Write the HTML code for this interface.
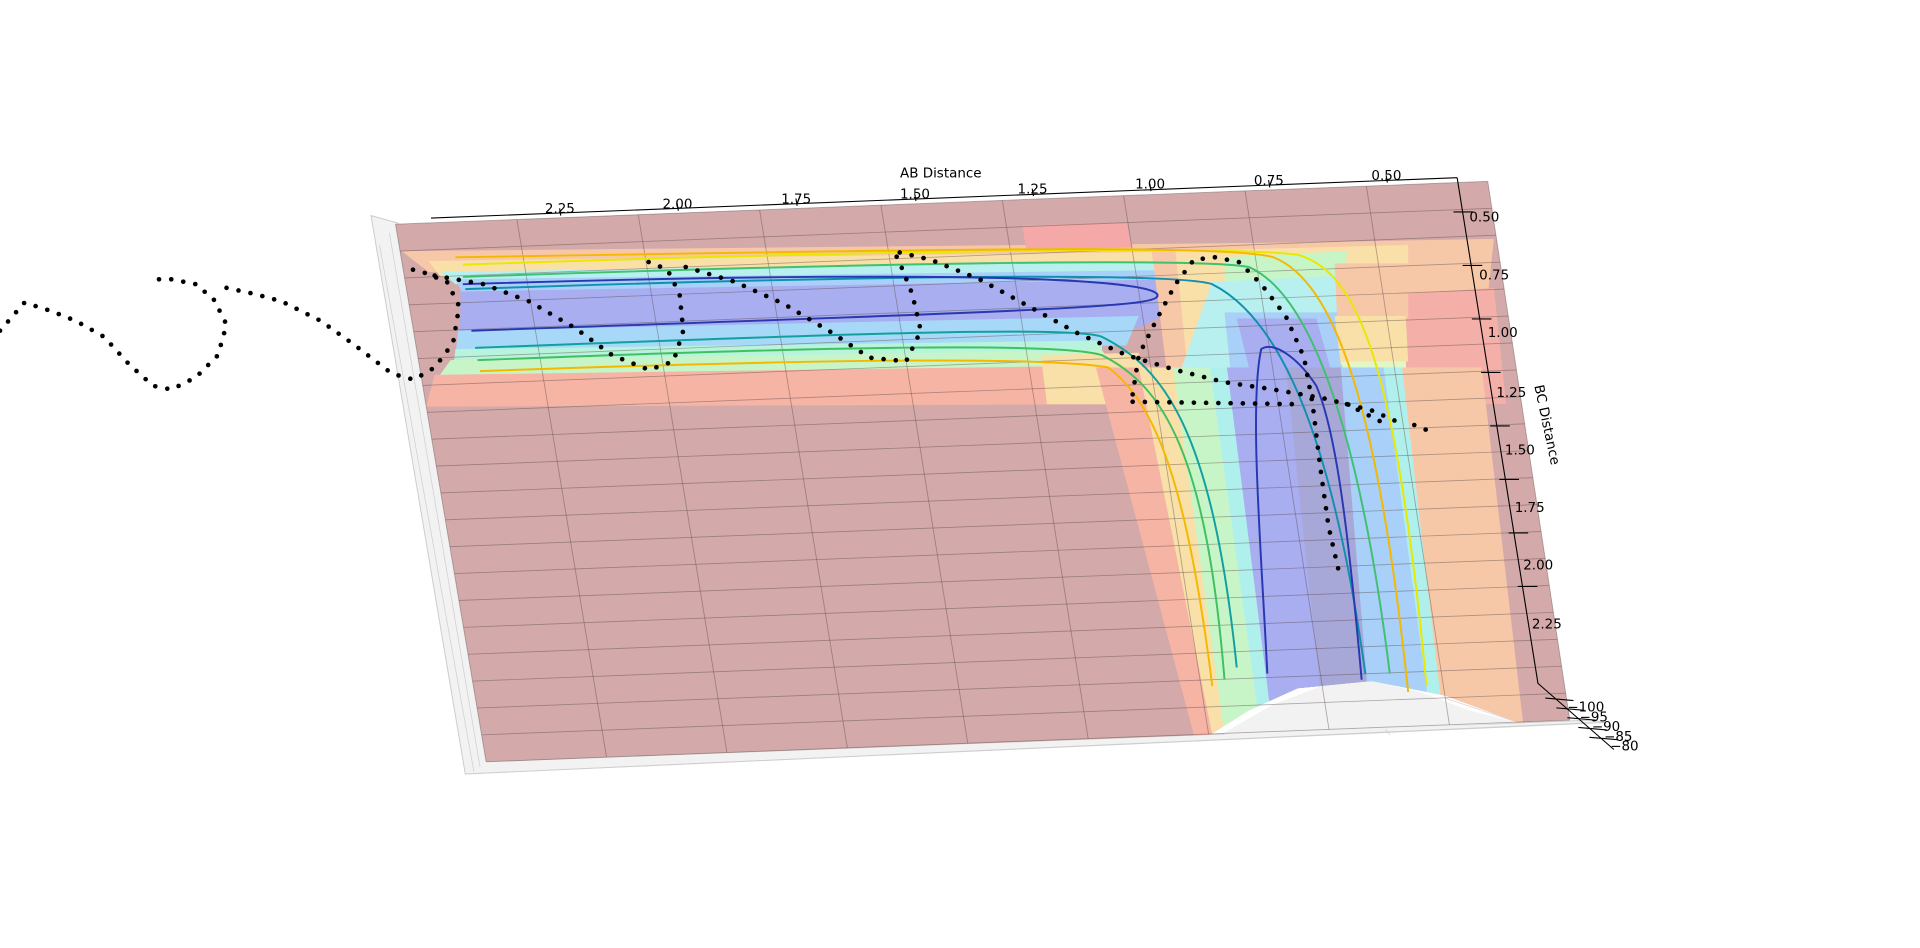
<!DOCTYPE html>
<html><head><meta charset="utf-8"><style>
html,body{margin:0;padding:0;background:#fff;width:1920px;height:948px;overflow:hidden}
svg{display:block}
text{font-family:"DejaVu Sans","Liberation Sans",sans-serif;font-size:11px;fill:#000}
</style></head><body>
<svg id="s" width="1920" height="948" viewBox="0 0 1568 774" xmlns="http://www.w3.org/2000/svg">
<defs><clipPath id="surf"><polygon points="323,183 1215,148 1282,588 1240,590 1180,568 1120,556 1060,562 1020,580 988,600 397,622"/></clipPath></defs>
<polygon points="303,176 325,182 398,622 1300,588 1310,590 380,632" fill="#f2f2f2" stroke="#ccc" stroke-width="0.8"/>
<g stroke="#cfcfcf" stroke-width="0.6" fill="none">
<line x1="310" y1="200" x2="387" y2="630"/><line x1="318" y1="190" x2="392" y2="626"/>
<line x1="380" y1="632" x2="1300" y2="590"/>
<line x1="960" y1="600" x2="1020" y2="578"/><line x1="1105" y1="560" x2="1135" y2="600"/><line x1="1240" y1="590" x2="1180" y2="570"/>
</g>
<polygon points="1000,598 1040,575 1080,560 1120,556 1160,565 1200,580 1240,590 1000,602" fill="#f2f2f2"/>
<g clip-path="url(#surf)">
<polygon points="323,183 1215,148 1282,588 1240,590 1180,568 1120,556 1060,562 1020,580 988,600 397,622" fill="#d3a9a9"/>
<polygon points="328,205 1050,198 1050,215 350,222" fill="#f6c8a8"/>
<polygon points="350,213 1000,205 1000,220 360,226" fill="#f8e0a8"/>
<polygon points="360,222 1000,212 1000,228 372,232" fill="#b8f0f0"/>
<polygon points="372,228 990,220 995,236 378,240" fill="#a8d0f8"/>
<polygon points="376,238 960,228 968,258 376,260" fill="#a8aef0"/>
<polygon points="376,258 960,252 930,268 374,285" fill="#a8aef0"/>
<polygon points="374,270 930,258 920,282 372,290" fill="#a8d8f8"/>
<polygon points="372,285 900,278 900,290 370,300" fill="#b8f4dc"/>
<polygon points="368,294 900,286 915,305 355,312" fill="#c8f5c8"/>
<polygon points="355,306 940,298 940,330 348,332" fill="#f6b4a4"/>
<polygon points="850,290 930,288 940,330 855,330" fill="#f8e0a8"/>
<polygon points="835,184 920,182 925,202 838,204" fill="#f4a8a8"/>
<polygon points="940,200 1220,195 1180,570 1150,565 1000,598 990,600" fill="#f6c8a8"/>
<polygon points="960,205 1150,200 1150,240 1140,380 1180,568 1160,565 1120,556 1060,562 1020,580 1000,595" fill="#f8e0a8"/>
<polygon points="1000,210 1100,205 1095,260 1120,330 1150,565 1120,556 1060,562 1025,578 1005,560" fill="#c8f5c8"/>
<polygon points="990,230 1095,225 1100,320 1140,570 1120,556 1060,562 1040,570 1010,520 965,300" fill="#b8f0f0"/>
<polygon points="1000,255 1095,255 1125,560 1060,562 1050,540 1010,350" fill="#a8d0f8"/>
<polygon points="1010,260 1075,260 1095,330 1120,558 1060,562 1045,500 1025,320" fill="#a8aef0"/>
<polygon points="1145,240 1220,235 1230,330 1150,330" fill="#f4b0a8"/>
<polygon points="1090,215 1150,215 1150,260 1092,260" fill="#f6c8a8"/>
<polygon points="1090,258 1148,258 1150,295 1095,298" fill="#f8e0a8"/>
<polygon points="1095,295 1148,295 1150,330 1105,330" fill="#e0f8c8"/>
<!-- vertical stripes -->
<polygon points="895,300 935,300 1000,600 975,600" fill="#f6b4a4"/>
<polygon points="930,300 962,300 1008,600 990,600" fill="#f8e0a8"/>
<polygon points="958,300 992,300 1038,600 1000,600" fill="#c8f5c8"/>
<polygon points="988,300 1005,300 1045,600 1030,600" fill="#b0f0ec"/>
<polygon points="1002,300 1055,300 1085,600 1040,600" fill="#a8aef0"/>
<polygon points="1050,300 1100,300 1125,600 1082,600" fill="#a8a8d8"/>
<polygon points="1095,300 1138,300 1175,600 1120,600" fill="#a8d0f8"/>
<polygon points="1130,300 1148,300 1185,600 1170,600" fill="#b0f0ec"/>
<polygon points="1145,300 1210,300 1245,600 1180,600" fill="#f6c8a8"/>
</g>
<g stroke="#5a4a4a" stroke-opacity="0.45" stroke-width="0.7" fill="none" id="wire"></g>
<g fill="none" stroke-width="1.6">
<path d="M378,216 C700,205 1000,200 1060,208 C1110,222 1140,300 1165,560" stroke="#e8e800"/>
<path d="M372,210 C700,205 1000,198 1040,210 C1090,230 1125,330 1150,565" stroke="#f5b800"/>
<path d="M378,226 C700,215 980,210 1020,218 C1070,240 1110,350 1135,550" stroke="#40c070"/>
<path d="M380,236 C700,225 960,222 990,232 C1050,262 1090,370 1115,550" stroke="#1090b0"/>
<path d="M378,232 C700,222 930,224 945,240 C950,250 900,252 385,270" stroke="#2838b0"/>
<path d="M388,284 C700,272 880,266 900,275 C950,300 990,350 1010,545" stroke="#10a0a0"/>
<path d="M390,294 C700,282 870,280 900,290 C950,315 985,370 1000,555" stroke="#40c060"/>
<path d="M392,303 C700,292 860,292 905,300 C945,330 970,400 990,560" stroke="#f5b800"/>
<path d="M1035,550 C1030,450 1020,330 1030,285 C1040,278 1060,292 1075,315 C1090,350 1100,420 1112,555" stroke="#2838b0"/>
</g>
<path id="traj" fill="none" stroke="none" d="M0,270 L20,247 L42,254 L62,262 L85,275 L105,297 L125,315 L140,318 L160,308 L178,290 L185,265 L175,245 L160,232 L140,228 L128,228 M185,235 L208,240 L230,246 L262,262 L290,282 L320,305 L338,310 L355,300 L370,280 L375,250 L365,230 L345,222 L328,218 M355,225 L395,232 L432,246 L470,268 L500,290 L530,302 L550,295 L558,270 L555,240 L545,220 L525,212 M560,218 L600,230 L640,248 L680,272 L710,292 L740,295 L752,270 L745,240 L735,215 L730,205 L760,212 L800,228 L840,250 L880,272 L920,290 L960,302 L1000,312 L1040,318 L1080,325 L1120,335 L1145,346 M925,322 L930,290 L945,260 L960,232 L975,212 L992,210 L1012,214 L1030,232 L1050,258 L1065,292 L1072,330 L1078,380 L1085,430 L1093,465 M925,328 L1060,330 M1100,330 L1135,348 M1155,347 L1170,353"/>
<g id="dots" fill="#000"></g>
<g stroke="#000" stroke-width="0.9" fill="none">
<line x1="352" y1="178" x2="1190" y2="145"/>
<polyline points="1190,145 1256,558 1318,612"/>
</g>
<g id="ticks" stroke="#000" stroke-width="0.9"></g>
<text x="735" y="145">AB Distance</text>
<text x="445" y="174">2.25</text><text x="541" y="170">2.00</text><text x="638" y="166">1.75</text>
<text x="735" y="162">1.50</text><text x="831" y="158">1.25</text><text x="927" y="154">1.00</text>
<text x="1024" y="151">0.75</text><text x="1120" y="147">0.50</text>
<text x="1200" y="181">0.50</text><text x="1208" y="228">0.75</text><text x="1215" y="275">1.00</text>
<text x="1222" y="324">1.25</text><text x="1229" y="371">1.50</text><text x="1237" y="418">1.75</text>
<text x="1244" y="465">2.00</text><text x="1251" y="513">2.25</text>
<text transform="translate(1253,315) rotate(78)">BC Distance</text>
<text x="1280" y="581">−100</text><text x="1290" y="589">−95</text><text x="1300" y="597">−90</text>
<text x="1310" y="605">−85</text><text x="1315" y="613">−80</text>
</svg>
<script>
var NS="http://www.w3.org/2000/svg";
var w=document.getElementById("wire");
function L(a,b,c,d){var l=document.createElementNS(NS,"line");l.setAttribute("x1",a);l.setAttribute("y1",b);l.setAttribute("x2",c);l.setAttribute("y2",d);w.appendChild(l);}
for(var i=0;i<=20;i++){var t=i/20;var y1=183+t*(622-183),x1=323+t*(397-323);var y2=148+t*(588-148),x2=1215+t*(1282-1215);L(x1,y1,x2,y2);}
for(var j=0;j<=9;j++){var t=j/9;var xa=323+t*(1215-323),ya=183+t*(148-183),xb=397+t*(1282-397),yb=622+t*(588-622);L(xa,ya,xb,yb);}
var p=document.getElementById("traj"),g=document.getElementById("dots");
var d=p.getAttribute("d").split("M").filter(function(s){return s.trim()});
d.forEach(function(seg){var q=document.createElementNS(NS,"path");q.setAttribute("d","M"+seg);q.setAttribute("fill","none");document.getElementById("s").appendChild(q);var len=q.getTotalLength();for(var s=0;s<=len;s+=10){var pt=q.getPointAtLength(s);var c=document.createElementNS(NS,"circle");c.setAttribute("cx",pt.x);c.setAttribute("cy",pt.y);c.setAttribute("r",1.9);g.appendChild(c);}q.remove();});
var tk=document.getElementById("ticks");
function T(a,b,c,d){var l=document.createElementNS(NS,"line");l.setAttribute("x1",a);l.setAttribute("y1",b);l.setAttribute("x2",c);l.setAttribute("y2",d);tk.appendChild(l);}
[[457,174],[553,170],[650,166],[747,162],[843,158],[939,154],[1036,151],[1132,147]].forEach(function(a){T(a[0],a[1]-4,a[0]+1,a[1]+2);});
for(var k=0;k<8;k++){var t=k/7.6;var x=1195+t*(1252-1195),y=173+t*(505-173);T(x-8,y,x+8,y);}
for(var k=0;k<5;k++){T(1262+k*9,570+k*8,1285+k*9,572+k*8);}
</script>
</body></html>
